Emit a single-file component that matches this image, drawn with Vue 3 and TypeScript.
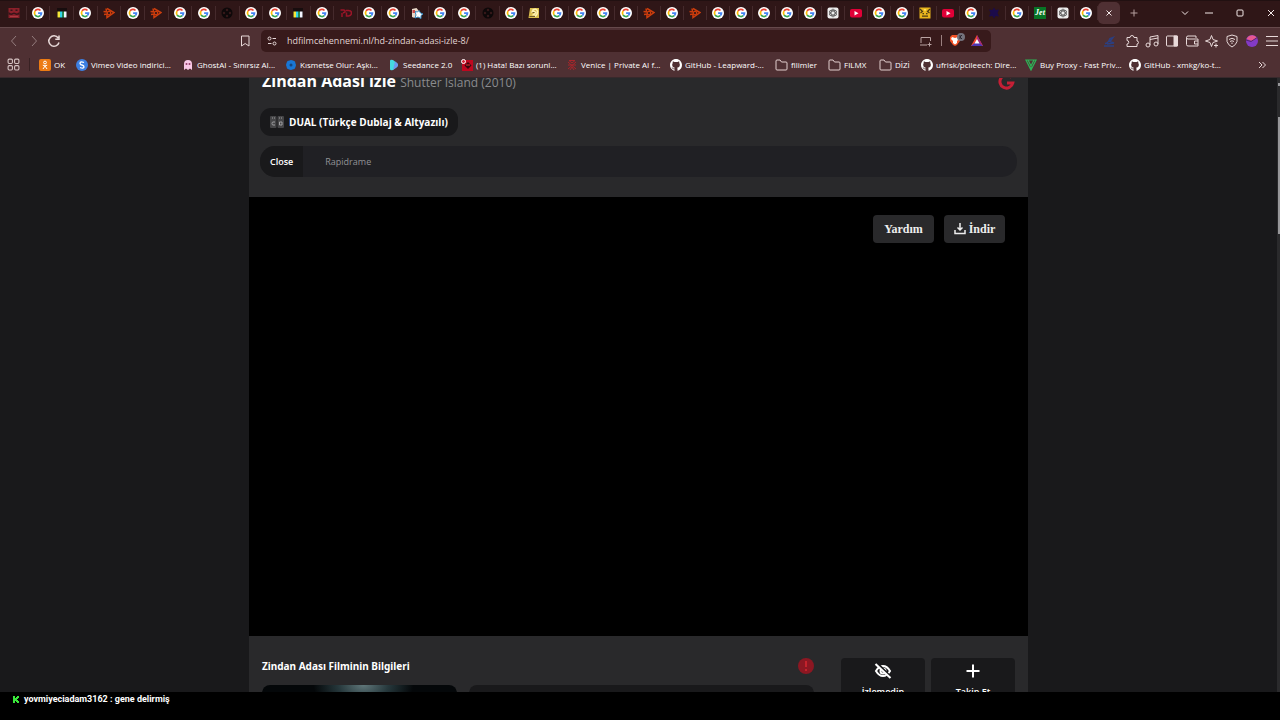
<script setup lang="ts">
type Tab = 'google' | 'mask' | 'bars' | 'orange' | 'reel' | 'rd' | 'shape' | 'sand' | 'gpt' | 'video' | 'gold' | 'navy' | 'jet'

interface Bookmark {
  icon: string
  label: string
  width: number
}

const pinned: Tab[] = [
  'mask', 'google', 'bars', 'google', 'orange', 'google', 'orange', 'google', 'google', 'reel', 'google',
  'google', 'bars', 'google', 'rd', 'google', 'google', 'shape', 'google', 'google', 'reel',
]
const recent: Tab[] = [
  'google', 'sand', 'google', 'google', 'google', 'google', 'orange', 'google', 'orange', 'google', 'google',
  'google', 'google', 'google', 'gpt', 'video', 'google', 'google', 'gold', 'video', 'google', 'navy', 'google',
  'jet', 'gpt', 'google',
]
const groups = [
  { name: 'wide', tabs: pinned },
  { name: 'narrow', tabs: recent },
]

const bookmarks: Bookmark[] = [
  { icon: 'ok', label: 'OK', width: 37 },
  { icon: 'vimeo', label: 'Vimeo Video indirici...', width: 106 },
  { icon: 'ghost', label: 'GhostAI - Sınırsız AI...', width: 103 },
  { icon: 'kismet', label: 'Kısmetse Olur: Aşkı...', width: 103 },
  { icon: 'dance', label: 'Seedance 2.0', width: 73 },
  { icon: 'alert', label: '(1) Hata! Bazı sorunl...', width: 105 },
  { icon: 'venice', label: 'Venice | Private AI f...', width: 104 },
  { icon: 'github', label: 'GitHub - Leapward-...', width: 105 },
  { icon: 'folder', label: 'filimler', width: 53 },
  { icon: 'folder', label: 'FILMX', width: 51 },
  { icon: 'folder', label: 'DİZİ', width: 42 },
  { icon: 'github', label: 'ufrisk/pcileech: Dire...', width: 104 },
  { icon: 'proxy', label: 'Buy Proxy - Fast Priv...', width: 104 },
  { icon: 'github', label: 'GitHub - xmkg/ko-t...', width: 104 },
]
</script>

<template>
  <div class="screen">
    <header class="browser">
      <div class="tabstrip">
        <div v-for="group in groups" :key="group.name" class="tabs" :class="group.name">
          <button v-for="(tab, i) in group.tabs" :key="i" class="tab" :aria-label="tab">
            <svg v-if="tab === 'google'" viewBox="0 0 24 24">
              <circle cx="12" cy="12" r="12" fill="#fff" />
              <g fill="none" stroke-width="3.4">
                <path d="M6.200 8A7 7 0 0 1 17 7" stroke="#ea4335" />
                <path d="M6.200 16A7 7 0 0 1 6.200 8" stroke="#fbbc05" />
                <path d="M16.600 17.300A7 7 0 0 1 6.200 16" stroke="#34a853" />
                <path d="M12.200 12.100H19A7 7 0 0 1 16.600 17.300" stroke="#4285f4" />
              </g>
            </svg>
            <svg v-else-if="tab === 'mask'" viewBox="0 0 24 24">
              <path d="M1 2h22v20H1z" fill="#8b202a" />
              <path d="M1 10l5 3 6-2 6 2 5-3v5l-6 1-5-2-5 2-6-1zM5 5h4v3H5zM15 5h4v3h-4z" fill="#351419" />
              <path d="M4 19h16" stroke="#a83940" stroke-width="2" />
            </svg>
            <svg v-else-if="tab === 'bars'" viewBox="0 0 24 24">
              <path d="M2 2h20v20H2z" fill="#170d0e" />
              <path d="M3 9h5v12H3z" fill="#f5e63a" />
              <path d="M8 9h5v12H8z" fill="#30d6e8" />
              <path d="M13 9h3v12h-3z" fill="#268f45" />
              <path d="M16 9h5v12h-5z" fill="#f5f5ff" />
            </svg>
            <svg v-else-if="tab === 'orange'" viewBox="0 0 24 24" fill="none" stroke="#cc3d0d" stroke-width="3">
              <path d="M6 3l1 6M8 3l14 8-14 10v-7M1 9l7 1M2 15l7-1" /><circle cx="12" cy="12" r="3.500" stroke-width="2.500" />
            </svg>
            <svg v-else-if="tab === 'reel'" viewBox="0 0 24 24">
              <circle cx="12" cy="12" r="11" fill="#0d0809" />
              <g fill="#351819">
                <circle cx="12" cy="6" r="2.500" /><circle cx="12" cy="18" r="2.500" />
                <circle cx="6" cy="12" r="2.500" /><circle cx="18" cy="12" r="2.500" />
              </g>
            </svg>
            <svg v-else-if="tab === 'rd'" viewBox="0 0 24 24" fill="none" stroke="#9b1528" stroke-width="3">
              <path d="M1 6h6q4 0 3 4l-4 2M4 12v8M12 7h5q6 0 6 5t-6 6h-4V11" />
            </svg>
            <svg v-else-if="tab === 'shape'" viewBox="0 0 24 24">
              <path d="M2 4l9-2 4 5-8 15-5-2z" fill="#e8d7c7" />
              <path d="M8 9l5 1 3-3 3 5 5 2-4 3v6l-6-3-6 2 2-6z" fill="#fff" stroke="#398cc1" stroke-width="2" />
              <path d="M3 6h5v6H3z" fill="#cc4b4a" />
            </svg>
            <svg v-else-if="tab === 'sand'" viewBox="0 0 24 24">
              <path d="M4 2h18v20H1z" fill="#d9bd4d" />
              <path d="M8 7q9-6 11 2 0 7-6 10M7 11q5-5 8 0-1 4-6 5" fill="none" stroke="#fff2b2" stroke-width="3" />
              <path d="M3 19h11M9 11h4" stroke="#705b27" stroke-width="2" />
            </svg>
            <svg v-else-if="tab === 'gpt'" viewBox="0 0 24 24">
              <rect x="1" y="1" width="22" height="22" rx="4" fill="#eee" />
              <g fill="none" stroke="#666" stroke-width="1.700">
                <ellipse cx="12" cy="12" rx="4" ry="8" />
                <ellipse cx="12" cy="12" rx="4" ry="8" transform="rotate(60 12 12)" />
                <ellipse cx="12" cy="12" rx="4" ry="8" transform="rotate(120 12 12)" />
              </g>
            </svg>
            <svg v-else-if="tab === 'video'" viewBox="0 0 24 24">
              <rect y="4" width="24" height="17" rx="4" fill="#e10037" />
              <path d="M9 8l8 4.500-8 4.500z" fill="#fff" />
            </svg>
            <svg v-else-if="tab === 'gold'" viewBox="0 0 24 24">
              <path d="M1 1h22v22H1z" fill="#e9b51d" />
              <path d="M2 4l5 5-4 3M22 4l-5 5 4 3M7 13h3M14 13h3M6 18h12" fill="none" stroke="#4c3b15" stroke-width="2.500" />
              <path d="M9 4h6l-3 5z" fill="#ffe45f" />
            </svg>
            <svg v-else-if="tab === 'navy'" viewBox="0 0 24 24">
              <path d="M12 1l3 5 7-1-3 7 3 7-7-1-3 5-3-5-7 1 3-7-3-7 7 1z" fill="#1b0b4b" />
            </svg>
            <span v-else class="jet">Jet</span>
          </button>
        </div>
        <button class="tab-active" aria-label="Close tab">
          <svg viewBox="0 0 12 12"><path d="M3.500 3.500l5 5m0-5l-5 5" /></svg>
        </button>
        <button class="newtab" aria-label="New tab">
          <svg viewBox="0 0 12 12"><path d="M6 2.500v7M2.500 6h7" /></svg>
        </button>
        <div class="window">
          <button aria-label="Search tabs"><svg viewBox="0 0 12 12"><path d="M3 4.500l3 3 3-3" /></svg></button>
          <button aria-label="Minimize"><svg viewBox="0 0 12 12"><path d="M2 6h8" /></svg></button>
          <button aria-label="Maximize"><svg viewBox="0 0 12 12"><rect x="3" y="3" width="6" height="6" rx="1" /></svg></button>
          <button aria-label="Close"><svg viewBox="0 0 12 12"><path d="M3 3l6 6m0-6l-6 6" /></svg></button>
        </div>
      </div>

      <div class="toolbar">
        <nav class="history">
          <button class="dim" aria-label="Back"><svg viewBox="0 0 14 14"><path d="M9 2L4.500 7 9 12" /></svg></button>
          <button class="dim" aria-label="Forward"><svg viewBox="0 0 14 14"><path d="M5 2l4.500 5L5 12" /></svg></button>
          <button aria-label="Reload">
            <svg viewBox="0 0 14 14"><path d="M12 8.500A5.200 5.200 0 1 1 11.200 4M12 1.500v3.800H8.300" stroke-width="1.500" /></svg>
          </button>
        </nav>
        <button class="save" aria-label="Bookmark"><svg viewBox="0 0 14 14"><path d="M3.500 2h7.500v10L7.200 9.500 3.500 12z" /></svg></button>
        <div class="omnibox">
          <svg class="tune" viewBox="0 0 14 14">
            <circle cx="4.500" cy="4.500" r="1.500" /><path d="M7.500 4.500H11" /><circle cx="9.500" cy="9.500" r="1.500" /><path d="M3 9.500h3.500" />
          </svg>
          <input type="text" aria-label="Address" value="hdfilmcehennemi.nl/hd-zindan-adasi-izle-8/" />
          <svg class="cast" viewBox="0 0 14 14"><path d="M3 9V3.500h9.500V7M2 11h7M11.500 8.500v4M9.500 10.500h4" /></svg>
          <i class="split"></i>
          <svg class="brave" viewBox="0 0 18 14">
            <path d="M3 3h6l2 2v4l-3 4-2 1-2-1L1 9V5z" fill="#f25227" stroke="none" />
            <path d="M3 5l3 1 3-1 1 2-2 2v2l-2 1.500L4 11V9L2 7z" fill="#fff" stroke="none" />
            <circle cx="12" cy="5" r="4" fill="#74727c" stroke="none" />
            <path d="M11 3v4M13 3l-2 2 2 2" stroke="#2b2730" />
          </svg>
          <svg class="bat" viewBox="0 0 14 14">
            <path d="M7 1L1 12h12z" fill="#f04732" stroke="none" />
            <path d="M7 1v6l6 5z" fill="#a02980" stroke="none" />
            <path d="M1 12l6-5 6 5z" fill="#4d35b2" stroke="none" />
            <path d="M7 5L4.500 9.500h5z" fill="#fff" stroke="none" />
          </svg>
        </div>
        <div class="extensions">
          <button class="faint" aria-label="Downloader">
            <svg viewBox="0 0 14 14"><path d="M2 12h10M3 9.500q3 0 5-5l3-1-3 4 4 1.500-7 1" stroke="#2c3f80" stroke-width="1.500" /></svg>
          </button>
          <button aria-label="Extensions">
            <svg viewBox="0 0 14 14"><path d="M2 3.500h3a2 2 0 0 1 4 0h3V7a1.500 1.500 0 0 1 0 3v2.500H2V10a1.700 1.700 0 0 0 0-3.500z" /></svg>
          </button>
          <button aria-label="Music">
            <svg viewBox="0 0 14 14"><path d="M5 11V3l8-1.500v8.500M5 5.500L13 4" /><circle cx="3" cy="11" r="2" /><circle cx="11" cy="10" r="2" /></svg>
          </button>
          <button aria-label="Sidebar">
            <svg viewBox="0 0 14 14"><rect x="1.500" y="2" width="11" height="10" rx="1" /><path d="M9 2h3.500v10H9z" fill="#e8d9d9" /></svg>
          </button>
          <button aria-label="Wallet">
            <svg viewBox="0 0 14 14"><path d="M11 4V2H3a1.500 1.500 0 0 0 0 3h10v7H3q-1.500 0-1.500-1.500V3.500M13 7H9.500v3H13" /></svg>
          </button>
          <button aria-label="Assistant">
            <svg viewBox="0 0 14 14"><path d="M6.500 1.500L8 5.500l4.500 1.500L8 8.500 6.500 12.500 5 8.500.500 7 5 5.500zM11 9.500v4M9 11.500h4" /></svg>
          </button>
          <button aria-label="VPN">
            <svg viewBox="0 0 14 14"><path d="M7 1l5 1.500v5Q11 11 7 13 3 11 2 7.500v-5zM4 5.500q3-2.500 6 0M5 7.500q2-1.500 4 0M7 8.500v1.500" /></svg>
          </button>
          <button aria-label="Profile">
            <svg viewBox="0 0 14 14">
              <circle cx="7" cy="7" r="6" fill="#833ac5" stroke="none" />
              <path d="M1.500 5A6 6 0 0 1 12 4L7 7z" fill="#e75891" stroke="none" />
              <path d="M1 6l5 1.500L13 3" stroke="#53256d" />
            </svg>
          </button>
          <button aria-label="Menu"><svg viewBox="0 0 14 14"><path d="M1 2.500h12M1 7h12M1 11.500h12" /></svg></button>
        </div>
      </div>

      <nav class="bookmarks">
        <button class="apps" aria-label="Apps">
          <svg viewBox="0 0 12 12"><rect x="1" y="1" width="4" height="4" rx="1" /><rect x="7" y="1" width="4" height="4" rx="1" /><rect x="1" y="7" width="4" height="4" rx="1" /><rect x="7" y="7" width="4" height="4" rx="1" /></svg>
        </button>
        <a v-for="b in bookmarks" :key="b.label" href="#" class="bookmark" :class="{ wideicon: b.icon === 'folder' }" :style="{ width: b.width + 'px' }">
          <svg v-if="b.icon === 'ok'" viewBox="0 0 12 12">
            <rect width="12" height="12" rx="2" fill="#ed7b13" /><circle cx="6" cy="3.500" r="1.400" stroke="#fff" fill="none" />
            <path d="M3.800 6.200Q6 7.500 8.200 6.200M6 7L4 10M6 7l2 3" stroke="#fff" fill="none" />
          </svg>
          <svg v-else-if="b.icon === 'vimeo'" viewBox="0 0 12 12">
            <circle cx="6" cy="6" r="6" fill="#3d7fe1" /><path d="M8 3.500Q4 2 4 4.500 4.500 6 6 6q2 .500 2 2-.500 2-4 .500" fill="none" stroke="#fff" stroke-width="1.300" />
          </svg>
          <svg v-else-if="b.icon === 'ghost'" viewBox="0 0 12 12">
            <path d="M2 11V5a4 4 0 0 1 8 0v6L8 9.500 6 11 4 9.500z" fill="#f9c8e6" /><circle cx="4.500" cy="5" r="1" fill="#913966" /><circle cx="7.500" cy="5" r="1" fill="#913966" />
          </svg>
          <svg v-else-if="b.icon === 'kismet'" viewBox="0 0 12 12">
            <path d="M6 1l2 .500 2 1 .500 2L11 6l-.500 2-1 2-2 .500L6 11l-2-.500-2-1-.500-2L1 6l.500-2 1-2 2-.500z" fill="#1976d5" /><circle cx="6" cy="6" r="1.500" fill="#14447e" />
          </svg>
          <svg v-else-if="b.icon === 'dance'" viewBox="0 0 12 12">
            <path d="M2 2q0-2 3-1l4 3q2 2 0 4l-4 3q-3 1-3-1z" fill="#45d9de" /><path d="M5 11l4-3q2-2 0-4L7 2.500z" fill="#6f95ed" />
          </svg>
          <svg v-else-if="b.icon === 'alert'" viewBox="0 0 12 12">
            <path d="M1 1h11v11H1z" fill="#bf071f" /><path d="M7 3l3.500 3.500L7 10 3.500 6.500z" fill="#35090d" /><path d="M5 6h4" stroke="#e33" /><circle cx="2.500" cy="2.500" r="2" fill="#d52737" stroke="#fff" />
          </svg>
          <svg v-else-if="b.icon === 'venice'" viewBox="0 0 12 12" fill="none" stroke="#a9252b">
            <path d="M2 3l8 7M10 3l-8 7M3 1.500h6L6 4zM2 6h8M4 11l2-3 2 3" />
          </svg>
          <svg v-else-if="b.icon === 'github'" viewBox="0 0 16 16" fill="#fff">
            <path d="M8 0C3.580 0 0 3.580 0 8c0 3.540 2.290 6.530 5.470 7.590.4.070.55-.17.55-.38 0-.19-.01-.82-.01-1.490-2.010.37-2.530-.49-2.690-.94-.09-.23-.48-.94-.82-1.130-.28-.15-.68-.52-.01-.53.63-.01 1.080.58 1.230.82.72 1.210 1.870.87 2.330.66.07-.52.28-.87.51-1.070-1.780-.2-3.640-.89-3.640-3.950 0-.87.31-1.590.82-2.150-.08-.2-.36-1.020.08-2.120 0 0 .67-.21 2.200.82a7.600 7.600 0 0 1 4 0c1.530-1.040 2.200-.82 2.200-.82.44 1.100.16 1.920.08 2.120.51.56.82 1.270.82 2.150 0 3.070-1.870 3.750-3.650 3.950.29.25.54.73.54 1.480 0 1.070-.01 1.930-.01 2.200 0 .21.15.46.55.38A8.010 8.010 0 0 0 16 8c0-4.420-3.580-8-8-8z" />
          </svg>
          <svg v-else-if="b.icon === 'folder'" viewBox="0 0 13 12" fill="none" stroke="#e3cfcf">
            <path d="M1 10V2q0-1 1-1h3l1.500 2H11q1 0 1 1v6q0 1-1 1H2q-1 0-1-1z" />
          </svg>
          <svg v-else viewBox="0 0 12 12" fill="none" stroke="#2db557" stroke-width="1.200"><path d="M1 1h10L6 11zM3 1l3 6 3-6M6 7v4" /></svg>
          <span>{{ b.label }}</span>
        </a>
        <button class="more" aria-label="More bookmarks"><svg viewBox="0 0 12 12"><path d="M3 3l3 3-3 3M6.500 3l3 3-3 3" /></svg></button>
      </nav>
    </header>

    <div class="viewport">
      <main class="panel">
        <section class="heading">
          <h1>Zindan Adası izle <small>Shutter Island (2010)</small></h1>
          <svg class="mark" viewBox="0 0 16 16"><path d="M13 3.500A6.500 6.500 0 1 0 14.300 9H8.500" /></svg>
        </section>
        <button class="dual">
          <svg viewBox="0 0 14 12">
            <rect width="6.500" height="12" rx="1" /><rect x="7.500" width="6.500" height="12" rx="1" />
            <path d="M2 2h1M4 2h1M9 2h1M11 2h1M5 6H3q-1 0-1 1.500T3 9h2M9.500 6h2.500v3H9.500z" />
          </svg>
          DUAL (Türkçe Dublaj &amp; Altyazılı)
        </button>
        <div class="sources">
          <button class="on">Close</button>
          <button>Rapidrame</button>
        </div>
        <section class="player">
          <button>Yardım</button>
          <button>
            <svg viewBox="0 0 12 12"><path d="M6 0v7M3.500 4.500L6 7l2.500-2.500M1 7v3.500h10V7" /></svg>
            İndir
          </button>
        </section>
        <section class="info">
          <div class="details">
            <div class="inforow">
              <h2>Zindan Adası Filminin Bilgileri</h2>
              <button class="report" aria-label="Report"><svg viewBox="0 0 16 16"><circle cx="8" cy="8" r="8" /><path d="M8 3v6M8 11v2" /></svg></button>
            </div>
            <div class="cards"><div class="poster"></div><div class="summary"></div></div>
          </div>
          <div class="actions">
            <button>
              <svg viewBox="0 0 18 16"><path d="M2 8q3-5 7-5t7 5q-3 5-7 5T2 8z" /><circle cx="9" cy="8" r="2.500" /><path class="gap" d="M3 .500l14 14" /><path d="M1.500 1l15 14" /></svg>
              İzlemedin
            </button>
            <button>
              <svg viewBox="0 0 18 16"><path d="M9 1.500v13M2.500 8h13" /></svg>
              Takip Et
            </button>
          </div>
        </section>
      </main>
      <div class="scroll"><i class="arrow"></i><i class="thumb"></i></div>
    </div>

    <footer class="chat">
      <svg viewBox="0 0 6 7"><path d="M0 0h2v2h1V1h1V0h2v2H5v1H4v1h1v1h1v2H4V6H3V5H2v2H0z" /></svg>
      <span>yovmiyeciadam3162 : gene delirmiş</span>
    </footer>
  </div>
</template>

<style>
html,
body {
  background: #000;
}
</style>

<style scoped>
* {
  box-sizing: border-box;
}
.screen {
  display: flex;
  flex-direction: column;
  height: 100vh;
  overflow: hidden;
  background: #000;
  color: #fff;
  font-family: "Open Sans", "Noto Sans", sans-serif;
}
button {
  display: flex;
  align-items: center;
  justify-content: center;
  padding: 0;
  border: 0;
  background: none;
  color: inherit;
  font: inherit;
}
.browser {
  flex: none;
  background: #4f3033;
}
.browser svg {
  flex: none;
}
.tabstrip {
  display: flex;
  align-items: center;
  height: 27px;
  padding: 0 0 1px 3px;
  background: #2f1617;
  box-shadow: inset 0 1px #211011;
}
.tabs {
  display: flex;
  flex: none;
}
.wide {
  width: 497px;
}
.narrow {
  width: 598px;
}
.tab {
  flex: 1;
  height: 14px;
  border-right: 1px solid #452a2c;
}
.tab svg {
  width: 12px;
  height: 12px;
}
.jet {
  width: 12px;
  height: 12px;
  background: #087526;
  font: italic bold 8px/12px "Liberation Serif", serif;
}
.tab-active {
  width: 22px;
  height: 22px;
  border-radius: 5px;
  background: #4f3033;
}
.tab-active svg,
.newtab svg,
.window svg {
  width: 12px;
  height: 12px;
  fill: none;
  stroke: #f3e8e8;
}
.newtab {
  width: 28px;
}
.newtab svg {
  stroke: #b69f9f;
}
.window {
  display: flex;
  margin-left: auto;
  gap: 19px;
  margin-right: 3px;
}
.window button:first-child {
  margin-right: -7px;
}
.toolbar {
  display: flex;
  align-items: center;
  height: 27px;
  box-shadow: inset 0 1px #66494b;
}
.toolbar svg {
  width: 14px;
  height: 14px;
  fill: none;
  stroke: #e8d9d9;
}
.history {
  display: flex;
  gap: 6px;
  padding-left: 7px;
}
.history .dim {
  opacity: 0.45;
}
.save {
  margin-left: 177px;
  margin-right: 9px;
}
.omnibox {
  display: flex;
  align-items: center;
  width: 57%;
  height: 22px;
  padding: 0 7px 0 4px;
  border-radius: 5px;
  background: #381a1b;
}
.omnibox input {
  flex: 1;
  min-width: 0;
  margin-left: 8px;
  padding: 0;
  border: 0;
  outline: 0;
  background: none;
  color: #e0d2d2;
  font: 9px/16px "Open Sans", "Noto Sans", sans-serif;
}
.omnibox .cast {
  stroke: #b9a3a3;
}
.split {
  width: 1px;
  height: 11px;
  margin: 0 7px 0 9px;
  background: #9b8080;
}
.omnibox .brave {
  width: 18px;
  margin-top: -4px;
}
.omnibox .bat {
  margin-left: 3px;
}
.extensions {
  display: flex;
  gap: 6px;
  margin-left: auto;
  padding-right: 1px;
}
.extensions .faint {
  margin-right: 3px;
}
.bookmarks {
  display: flex;
  align-items: center;
  height: 24px;
  padding-bottom: 2px;
  padding-right: 12px;
  border-bottom: 1px solid #38292c;
}
.apps {
  width: 30px;
  padding-left: 7px;
  padding-right: 10px;
  margin-right: 9px;
  border-right: 1px solid #382123;
}
.apps svg {
  width: 13px;
  height: 13px;
  fill: none;
  stroke: #d7c4c4;
}
.bookmark {
  display: flex;
  flex: none;
  align-items: center;
  gap: 3px;
  color: #fff;
  font: 500 8px/12px "Open Sans", "Noto Sans", sans-serif;
  text-decoration: none;
  white-space: nowrap;
}
.bookmark svg {
  width: 12px;
  height: 12px;
}
.bookmark.wideicon svg {
  width: 13px;
}
.more {
  margin-left: auto;
}
.more svg {
  width: 12px;
  height: 12px;
  fill: none;
  stroke: #e8d9d9;
}
.viewport {
  display: flex;
  flex: 1;
  min-height: 0;
  overflow: hidden;
  background: #19191b;
}
.panel {
  width: 100%;
  max-width: 779px;
  height: max-content;
  margin: 0 auto;
  background: #29292b;
}
.heading {
  display: flex;
  align-items: center;
  justify-content: space-between;
  height: 24px;
  margin-top: -8px;
  padding: 0 13px;
}
h1 {
  margin: 0;
  font: 700 16px/24px "Open Sans", "Noto Sans", sans-serif;
}
h1 small {
  color: #8b8b8e;
  font: 400 12px/24px "Open Sans", "Noto Sans", sans-serif;
}
.mark {
  width: 17px;
  height: 16px;
  fill: none;
  stroke: #c51f35;
  stroke-width: 3;
}
.dual {
  gap: 5px;
  height: 28px;
  margin: 14px 0 0 11px;
  padding: 0 10px;
  border-radius: 11px;
  background: #19191b;
  font-size: 10px;
  font-weight: 700;
}
.dual svg {
  width: 14px;
  height: 12px;
  fill: #454547;
  stroke: #a0a0a2;
}
.dual rect {
  stroke: none;
}
.sources {
  display: flex;
  height: 31px;
  margin: 10px 11px 20px;
  overflow: hidden;
  border-radius: 15px;
  background: #202024;
  font-size: 9px;
}
.sources button {
  padding: 0 22px;
  color: #929296;
}
.sources .on {
  padding: 0 10px;
  background: #19191b;
  color: #fff;
  font-weight: 600;
}
.player {
  display: flex;
  justify-content: flex-end;
  align-items: flex-start;
  gap: 10px;
  height: 439px;
  padding: 18px 23px;
  background: #000;
}
.player button {
  gap: 3px;
  width: 61px;
  height: 28px;
  border-radius: 4px;
  background: #29292b;
  color: #eee;
  font: bold 12px/16px "Liberation Serif", serif;
}
.player svg {
  width: 12px;
  height: 12px;
  fill: none;
  stroke: #eee;
  stroke-width: 1.5;
}
.info {
  display: flex;
  height: 180px;
  padding: 22px 13px 0;
}
.details {
  flex: 1;
}
.inforow {
  display: flex;
  align-items: center;
  justify-content: space-between;
  height: 16px;
}
h2 {
  margin: 0;
  font: 700 10px/16px "Noto Sans", "Open Sans", sans-serif;
}
.report svg {
  width: 16px;
  height: 16px;
  fill: #8c1722;
  stroke: #c4222c;
  stroke-width: 2;
}
.report circle {
  stroke: none;
}
.cards {
  display: flex;
  gap: 12px;
  margin-top: 11px;
}
.poster,
.summary {
  height: 130px;
  border-radius: 8px;
}
.poster {
  width: 195px;
  background: radial-gradient(ellipse 50px 30px at 52% 0, #60777a, #26383c 50%, #040709 100%);
}
.summary {
  flex: 1;
  background: #19191b;
}
.actions {
  display: flex;
  gap: 6px;
  margin-left: 27px;
}
.actions button {
  flex-direction: column;
  justify-content: flex-start;
  gap: 5px;
  width: 84px;
  height: 60px;
  padding-top: 5px;
  border-radius: 4px;
  background: #19191b;
  font-size: 9px;
  line-height: 16px;
  font-weight: 600;
}
.actions svg {
  width: 18px;
  height: 16px;
  fill: none;
  stroke: #fff;
  stroke-width: 2;
}
.actions .gap {
  stroke: #19191b;
  stroke-width: 3;
}
.scroll {
  flex: none;
  width: 3px;
  padding-top: 5px;
  background: #2a2a2c;
}
.arrow,
.thumb {
  display: block;
  width: 2px;
  margin-left: 1px;
  background: #97979a;
}
.arrow {
  height: 3px;
  margin-bottom: 31px;
}
.thumb {
  height: 117px;
}
.chat {
  display: flex;
  flex: none;
  align-items: flex-start;
  gap: 5px;
  height: 28px;
  padding-left: 13px;
  background: #000;
  font: bold 9px/15px Roboto, sans-serif;
}
.chat svg {
  width: 6px;
  height: 7px;
  margin-top: 4px;
  fill: #3be83b;
}
</style>
